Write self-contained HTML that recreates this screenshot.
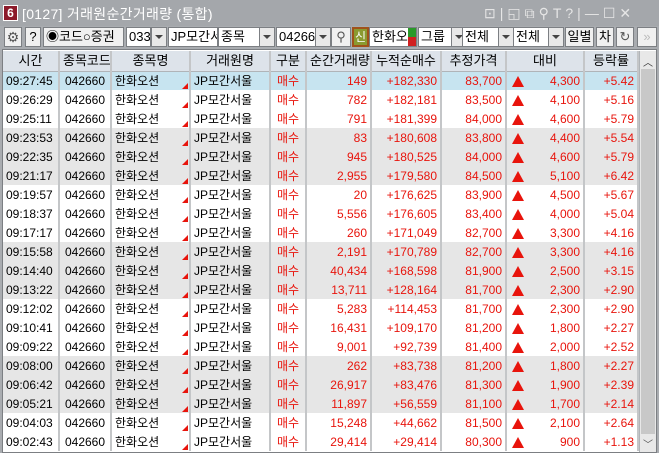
<!DOCTYPE html>
<html><head><meta charset="utf-8"><style>
*{margin:0;padding:0;box-sizing:border-box}
body{width:659px;height:453px;overflow:hidden;background:#a9acb0;font-family:"Liberation Sans","Noto Sans CJK KR",sans-serif;font-size:12px;position:relative}
.a{position:absolute}
.title{left:0;top:0;width:659px;height:26px;background:#a4a7ab;color:#fff;font-size:14px}
.box{position:absolute;top:27px;height:20px;background:#fff;border:1px solid #7c7f83;font-size:13px;line-height:18px;padding-left:2px;white-space:nowrap;overflow:hidden;color:#000}
.btn{position:absolute;top:27px;height:20px;background:#f0f0f0;border:1px solid #7c7f83;font-size:13px;line-height:18px;text-align:center;color:#000}
.dd{position:absolute;top:27px;width:16px;height:20px;background:#e8e8e8;border:1px solid #7c7f83}
.dd:after{content:"";position:absolute;left:3px;top:7px;border-left:4px solid transparent;border-right:4px solid transparent;border-top:4px solid #444}
table{position:absolute;left:3px;top:51px;width:635px;border-collapse:collapse;table-layout:fixed;background:#fff}
td,th{height:19px;font-weight:normal;font-size:12px;white-space:nowrap;overflow:hidden;border-right:2px solid #c4c6c8;padding:0 3px;line-height:18px}
th{background:#dde3ea;color:#000;font-size:13px;text-align:center;height:20px;border-bottom:1px solid #b0b4b8}
td{color:#000}
.r{color:#e8140c;text-align:right}
.c{text-align:center}
.w td{background:#fff}.g td{background:#e6e6e6}.s td{background:#c7e4f0}
.nm{position:relative}
.nm:after{content:"";position:absolute;right:1px;bottom:1px;border-left:6px solid transparent;border-bottom:6px solid #e8140c}
.tri{display:inline-block;float:left;margin-top:4px;margin-left:2px;border-left:6px solid transparent;border-right:6px solid transparent;border-bottom:11px solid #e8140c}
</style></head><body>
<div class="a title">
 <div class="a" style="left:3px;top:5px;width:15px;height:16px;background:#8c1a2a;border:1px solid #fff;font-size:12px;font-weight:bold;text-align:center;line-height:14px">6</div>
 <div class="a" style="left:22px;top:4px;font-size:14px;letter-spacing:0.3px">[0127] 거래원순간거래량 (통합)</div>
 <div class="a" style="left:484px;top:5px;font-size:14px;color:#e6e6e6;letter-spacing:4px">⊡|◱⧉⚲T?|—☐✕</div>
</div>
<div class="btn" style="left:4px;width:18px;font-size:14px;color:#555">⚙</div>
<div class="btn" style="left:25px;width:16px">?</div>
<div class="box" style="left:43px;width:81px;background:#f0f0f0">◉코드○증권</div>
<div class="box" style="left:126px;width:25px">033</div><div class="dd" style="left:151px"></div>
<div class="box" style="left:168px;width:50px">JP모간서</div>
<div class="box" style="left:218px;width:42px">종목</div><div class="dd" style="left:259px"></div>
<div class="box" style="left:276px;width:40px">04266C</div><div class="dd" style="left:315px"></div>
<div class="btn" style="left:331px;width:20px;color:#555">⚲</div>
<div class="a" style="left:352px;top:27px;width:17px;height:20px;background:#8a9a30;border:2px solid #a0521a;color:#fff;font-size:12px;text-align:center;line-height:16px">신</div>
<div class="box" style="left:369px;width:48px">한화오</div>
<div class="a" style="left:408px;top:28px;width:8px;height:18px;background:linear-gradient(#2a9a2a 50%,#d02020 50%)"></div>
<div class="box" style="left:418px;width:38px">그룹</div><div class="dd" style="left:451px"></div>
<div class="box" style="left:462px;width:50px">전체</div><div class="dd" style="left:498px"></div>
<div class="box" style="left:513px;width:46px">전체</div><div class="dd" style="left:548px"></div>
<div class="btn" style="left:565px;width:29px">일별</div>
<div class="btn" style="left:596px;width:18px">차</div>
<div class="btn" style="left:616px;width:18px;color:#555">↻</div>
<div class="btn" style="left:637px;width:20px;color:#bbb">»</div>
<div class="a" style="left:2px;top:49px;width:655px;height:404px;background:#fff;border:1px solid #7c7f83"></div>
<table>
<colgroup><col style="width:56px"><col style="width:52px"><col style="width:79px"><col style="width:80px"><col style="width:36px"><col style="width:65px"><col style="width:70px"><col style="width:65px"><col style="width:78px"><col style="width:54px"></colgroup>
<tr><th>시간</th><th>종목코드</th><th>종목명</th><th>거래원명</th><th>구분</th><th>순간거래량</th><th>누적순매수</th><th>추정가격</th><th>대비</th><th>등락률</th></tr>
<tr class="s"><td>09:27:45</td><td class="c">042660</td><td class="nm">한화오션</td><td>JP모간서울</td><td class="r c">매수</td><td class="r">149</td><td class="r">+182,330</td><td class="r">83,700</td><td class="r"><span class="tri"></span>4,300</td><td class="r">+5.42</td></tr>
<tr class="w"><td>09:26:29</td><td class="c">042660</td><td class="nm">한화오션</td><td>JP모간서울</td><td class="r c">매수</td><td class="r">782</td><td class="r">+182,181</td><td class="r">83,500</td><td class="r"><span class="tri"></span>4,100</td><td class="r">+5.16</td></tr>
<tr class="w"><td>09:25:11</td><td class="c">042660</td><td class="nm">한화오션</td><td>JP모간서울</td><td class="r c">매수</td><td class="r">791</td><td class="r">+181,399</td><td class="r">84,000</td><td class="r"><span class="tri"></span>4,600</td><td class="r">+5.79</td></tr>
<tr class="g"><td>09:23:53</td><td class="c">042660</td><td class="nm">한화오션</td><td>JP모간서울</td><td class="r c">매수</td><td class="r">83</td><td class="r">+180,608</td><td class="r">83,800</td><td class="r"><span class="tri"></span>4,400</td><td class="r">+5.54</td></tr>
<tr class="g"><td>09:22:35</td><td class="c">042660</td><td class="nm">한화오션</td><td>JP모간서울</td><td class="r c">매수</td><td class="r">945</td><td class="r">+180,525</td><td class="r">84,000</td><td class="r"><span class="tri"></span>4,600</td><td class="r">+5.79</td></tr>
<tr class="g"><td>09:21:17</td><td class="c">042660</td><td class="nm">한화오션</td><td>JP모간서울</td><td class="r c">매수</td><td class="r">2,955</td><td class="r">+179,580</td><td class="r">84,500</td><td class="r"><span class="tri"></span>5,100</td><td class="r">+6.42</td></tr>
<tr class="w"><td>09:19:57</td><td class="c">042660</td><td class="nm">한화오션</td><td>JP모간서울</td><td class="r c">매수</td><td class="r">20</td><td class="r">+176,625</td><td class="r">83,900</td><td class="r"><span class="tri"></span>4,500</td><td class="r">+5.67</td></tr>
<tr class="w"><td>09:18:37</td><td class="c">042660</td><td class="nm">한화오션</td><td>JP모간서울</td><td class="r c">매수</td><td class="r">5,556</td><td class="r">+176,605</td><td class="r">83,400</td><td class="r"><span class="tri"></span>4,000</td><td class="r">+5.04</td></tr>
<tr class="w"><td>09:17:17</td><td class="c">042660</td><td class="nm">한화오션</td><td>JP모간서울</td><td class="r c">매수</td><td class="r">260</td><td class="r">+171,049</td><td class="r">82,700</td><td class="r"><span class="tri"></span>3,300</td><td class="r">+4.16</td></tr>
<tr class="g"><td>09:15:58</td><td class="c">042660</td><td class="nm">한화오션</td><td>JP모간서울</td><td class="r c">매수</td><td class="r">2,191</td><td class="r">+170,789</td><td class="r">82,700</td><td class="r"><span class="tri"></span>3,300</td><td class="r">+4.16</td></tr>
<tr class="g"><td>09:14:40</td><td class="c">042660</td><td class="nm">한화오션</td><td>JP모간서울</td><td class="r c">매수</td><td class="r">40,434</td><td class="r">+168,598</td><td class="r">81,900</td><td class="r"><span class="tri"></span>2,500</td><td class="r">+3.15</td></tr>
<tr class="g"><td>09:13:22</td><td class="c">042660</td><td class="nm">한화오션</td><td>JP모간서울</td><td class="r c">매수</td><td class="r">13,711</td><td class="r">+128,164</td><td class="r">81,700</td><td class="r"><span class="tri"></span>2,300</td><td class="r">+2.90</td></tr>
<tr class="w"><td>09:12:02</td><td class="c">042660</td><td class="nm">한화오션</td><td>JP모간서울</td><td class="r c">매수</td><td class="r">5,283</td><td class="r">+114,453</td><td class="r">81,700</td><td class="r"><span class="tri"></span>2,300</td><td class="r">+2.90</td></tr>
<tr class="w"><td>09:10:41</td><td class="c">042660</td><td class="nm">한화오션</td><td>JP모간서울</td><td class="r c">매수</td><td class="r">16,431</td><td class="r">+109,170</td><td class="r">81,200</td><td class="r"><span class="tri"></span>1,800</td><td class="r">+2.27</td></tr>
<tr class="w"><td>09:09:22</td><td class="c">042660</td><td class="nm">한화오션</td><td>JP모간서울</td><td class="r c">매수</td><td class="r">9,001</td><td class="r">+92,739</td><td class="r">81,400</td><td class="r"><span class="tri"></span>2,000</td><td class="r">+2.52</td></tr>
<tr class="g"><td>09:08:00</td><td class="c">042660</td><td class="nm">한화오션</td><td>JP모간서울</td><td class="r c">매수</td><td class="r">262</td><td class="r">+83,738</td><td class="r">81,200</td><td class="r"><span class="tri"></span>1,800</td><td class="r">+2.27</td></tr>
<tr class="g"><td>09:06:42</td><td class="c">042660</td><td class="nm">한화오션</td><td>JP모간서울</td><td class="r c">매수</td><td class="r">26,917</td><td class="r">+83,476</td><td class="r">81,300</td><td class="r"><span class="tri"></span>1,900</td><td class="r">+2.39</td></tr>
<tr class="g"><td>09:05:21</td><td class="c">042660</td><td class="nm">한화오션</td><td>JP모간서울</td><td class="r c">매수</td><td class="r">11,897</td><td class="r">+56,559</td><td class="r">81,100</td><td class="r"><span class="tri"></span>1,700</td><td class="r">+2.14</td></tr>
<tr class="w"><td>09:04:03</td><td class="c">042660</td><td class="nm">한화오션</td><td>JP모간서울</td><td class="r c">매수</td><td class="r">15,248</td><td class="r">+44,662</td><td class="r">81,500</td><td class="r"><span class="tri"></span>2,100</td><td class="r">+2.64</td></tr>
<tr class="w"><td>09:02:43</td><td class="c">042660</td><td class="nm">한화오션</td><td>JP모간서울</td><td class="r c">매수</td><td class="r">29,414</td><td class="r">+29,414</td><td class="r">80,300</td><td class="r"><span class="tri"></span>900</td><td class="r">+1.13</td></tr>
</table>
<div class="a" style="left:639px;top:51px;width:17px;height:401px;background:#e8e8e8;border-left:1px solid #b0b4b8"></div>
<div class="a" style="left:641px;top:69px;width:14px;height:365px;background:#c8c8c8"></div>
<div class="a" style="left:641px;top:54px;width:14px;font-size:10px;color:#333;text-align:center">︿</div>
<div class="a" style="left:641px;top:436px;width:14px;font-size:10px;color:#555;text-align:center">﹀</div>
</body></html>
